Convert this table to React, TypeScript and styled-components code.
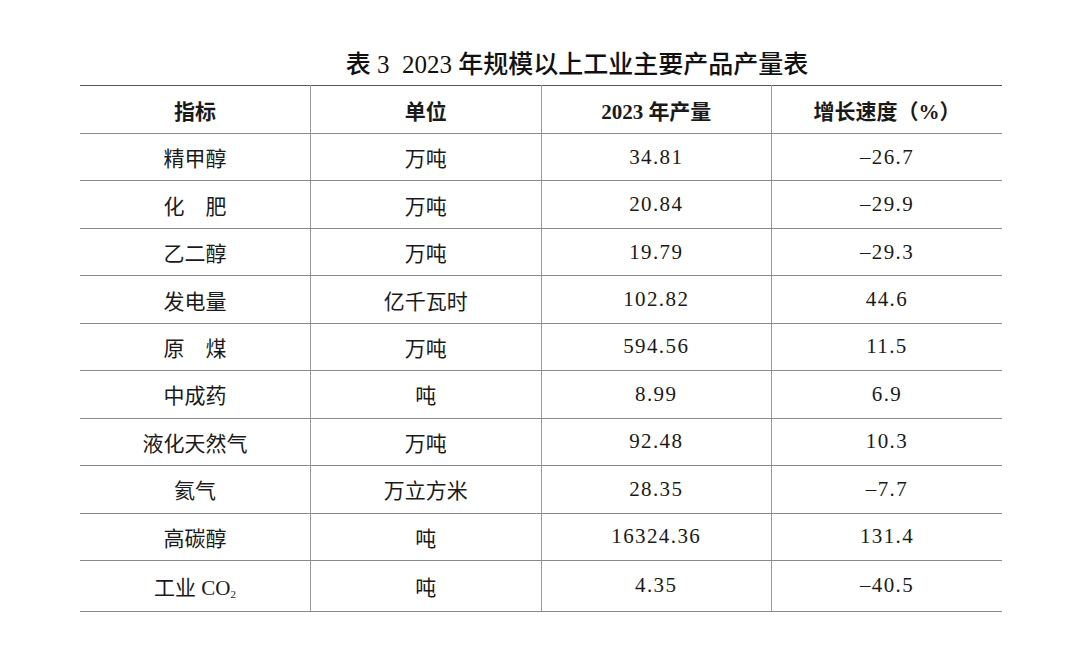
import React from "react";
import styled, {createGlobalStyle} from "styled-components";

const GlobalStyle = createGlobalStyle`
  html, body {
    margin: 0;
    padding: 0;
    background: #ffffff;
  }
  body {
    font-family: "Liberation Serif", "Noto Sans CJK SC", serif;
    color: #1a1a1a;
  }
`

const Page = styled.div`
  width: 1080px;
  height: 665px;
  box-sizing: border-box;
  padding: 50px 0 0 80px;
`

const Title = styled.h1`
  margin: 0 0 5px 0;
  width: 922px;
  padding-left: 72px;
  box-sizing: border-box;
  text-align: center;
  font-size: 25px;
  line-height: 30px;
  font-weight: 500;
  color: #111;
  font-family: "Liberation Serif", "Noto Sans CJK SC", serif;
`

const Table = styled.table`
  width: 922px;
  border-collapse: collapse;
  border-top: 1.5px solid #555;
  border-bottom: 1.5px solid #555;
  table-layout: fixed;
`

const Cell = styled.td<{ $head?: boolean; $tall?: boolean }>`
  height: ${p => (p.$head ? 47 : p.$tall ? 50 : 46.45)}px;
  padding: 0;
  text-align: center;
  vertical-align: middle;
  font-size: 21px;
  font-weight: ${p => (p.$head ? 700 : 400)};
  font-family: "Liberation Serif", "Noto Sans CJK SC", serif;
  color: #1a1a1a;
  border-bottom: 1.2px solid #8a8a8a;
  border-left: 1.5px solid #9a9a9a;

  &:first-child {
    border-left: none;
  }
`

const Num = styled.span`
  letter-spacing: 1.4px;
`

const Sub = styled.sub`
  font-size: 11px;
  vertical-align: -3px;
`

type Row = { name: React.ReactNode; unit: string; output: string; growth: string };

const rows: Row[] = [
  {name: "精甲醇", unit: "万吨", output: "34.81", growth: "–26.7"},
  {name: "化　肥", unit: "万吨", output: "20.84", growth: "–29.9"},
  {name: "乙二醇", unit: "万吨", output: "19.79", growth: "–29.3"},
  {name: "发电量", unit: "亿千瓦时", output: "102.82", growth: "44.6"},
  {name: "原　煤", unit: "万吨", output: "594.56", growth: "11.5"},
  {name: "中成药", unit: "吨", output: "8.99", growth: "6.9"},
  {name: "液化天然气", unit: "万吨", output: "92.48", growth: "10.3"},
  {name: "氦气", unit: "万立方米", output: "28.35", growth: "–7.7"},
  {name: "高碳醇", unit: "吨", output: "16324.36", growth: "131.4"},
  {name: <>工业 CO<Sub>2</Sub></>, unit: "吨", output: "4.35", growth: "–40.5"},
];

export default function App() {
  return (
    <Page>
      <GlobalStyle/>
      <Title>表 3&nbsp; 2023 年规模以上工业主要产品产量表</Title>
      <Table>
        <thead>
        <tr>
          <Cell as="th" $head>指标</Cell>
          <Cell as="th" $head>单位</Cell>
          <Cell as="th" $head>2023 年产量</Cell>
          <Cell as="th" $head>增长速度（%）</Cell>
        </tr>
        </thead>
        <tbody>
        {rows.map((r, i) => {
          const tall = i === rows.length - 1;
          return (
            <tr key={i}>
              <Cell $tall={tall}>{r.name}</Cell>
              <Cell $tall={tall}>{r.unit}</Cell>
              <Cell $tall={tall}><Num>{r.output}</Num></Cell>
              <Cell $tall={tall}><Num>{r.growth}</Num></Cell>
            </tr>
          );
        })}
        </tbody>
      </Table>
    </Page>
  );
}
